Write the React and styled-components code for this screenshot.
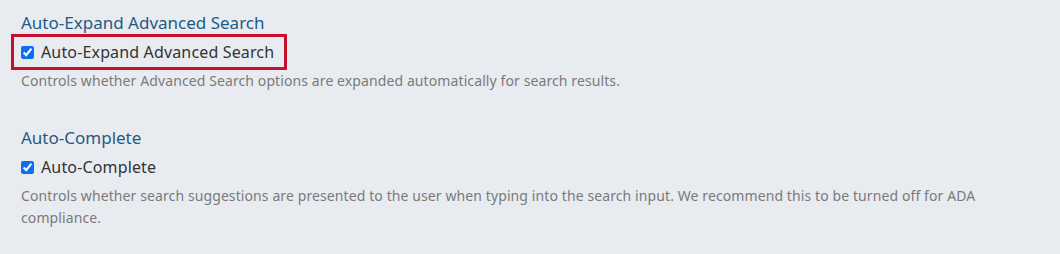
import React from "react";
import styled, { createGlobalStyle } from "styled-components";

const GlobalStyle = createGlobalStyle`
  html, body {
    margin: 0;
    padding: 0;
    background: #e8ecf0;
  }
  body {
    font-family: "Noto Sans", Lato, sans-serif;
  }
`;

const Page = styled.div`
  width: 1060px;
  height: 254px;
  box-sizing: border-box;
  padding: 12px 24px 0 11px;
  background: #e8ecf0;
`;

const Section = styled.section`
  margin-bottom: 35px;
`;

const Title = styled.h3`
  margin: 0 0 0 10px;
  font-size: 17px;
  font-weight: 400;
  line-height: 22px;
  color: #1f5a86;
`;

const Row = styled.label`
  display: inline-flex;
  align-items: center;
  gap: 7px;
  padding: 5px 10px 5px 7px;
  border: 3px solid ${(p) => (p.$highlight ? "#c8102e" : "transparent")};
  font-size: 16px;
  letter-spacing: 0.15px;
  line-height: 20px;
  color: #333;
  cursor: pointer;

  input {
    margin: 0;
    width: 13px;
    height: 13px;
    accent-color: #0b6ef5;
  }
`;

const Help = styled.p`
  margin: 0 0 0 10px;
  font-size: 14px;
  letter-spacing: 0.1px;
  line-height: 22px;
  color: #7a7a7a;
`;

const settings = [
  {
    key: "expand",
    title: "Auto-Expand Advanced Search",
    help: "Controls whether Advanced Search options are expanded automatically for search results.",
    highlight: true,
  },
  {
    key: "complete",
    title: "Auto-Complete",
    help: "Controls whether search suggestions are presented to the user when typing into the search input. We recommend this to be turned off for ADA compliance.",
  },
];

export default function App() {
  return (
    <Page>
      <GlobalStyle />
      {settings.map((s) => (
        <Section key={s.key}>
          <Title>{s.title}</Title>
          <Row $highlight={s.highlight}>
            <input type="checkbox" defaultChecked />
            {s.title}
          </Row>
          <Help>{s.help}</Help>
        </Section>
      ))}
    </Page>
  );
}
